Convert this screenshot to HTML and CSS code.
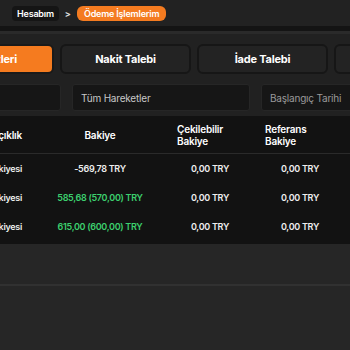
FILE: index.html
```html
<!DOCTYPE html>
<html lang="tr">
<head>
    <meta charset="UTF-8" />
    <title>Ödeme İşlemlerim</title>
    <link rel="stylesheet" href="styles.css">
</head>
<body>
    <header class="topbar">
        <nav class="crumbs">
            <a href="/hesabim" class="crumb">Hesabım</a>
            <span class="sep">&gt;</span>
            <a href="/odeme-islemlerim" class="crumb active">Ödeme İşlemlerim</a>
        </nav>
    </header>
    <div class="divider"></div>

    <main class="page">
        <div class="tabs">
            <button class="tab active">Hareketleri</button>
            <button class="tab">Nakit Talebi</button>
            <button class="tab">İade Talebi</button>
            <button class="tab">Para Yatırma</button>
        </div>

        <div class="filters">
            <div class="field field-first">İşlem Türü</div>
            <div class="field">Tüm Hareketler</div>
            <div class="field muted">Başlangıç Tarihi</div>
            <div class="field muted">Bitiş Tarihi</div>
        </div>
    </main>

    <div class="table-wrap">
        <table class="balances">
            <colgroup>
                <col style="width: 122px">
                <col style="width: 110px">
                <col style="width: 110px">
                <col style="width: 70px">
                <col style="width: 100px">
            </colgroup>
            <thead>
                <tr>
                    <th class="col-name">Açıklık</th>
                    <th>Bakiye</th>
                    <th class="left pad">Çekilebilir<br>Bakiye</th>
                    <th class="left">Referans<br>Bakiye</th>
                    <th></th>
                </tr>
            </thead>
            <tbody>
                <tr>
                    <td class="col-name">Nakit Bakiyesi</td>
                    <td>-569,78 TRY</td>
                    <td>0,00 TRY</td>
                    <td>0,00 TRY</td>
                    <td></td>
                </tr>
                <tr>
                    <td class="col-name">Spor Bakiyesi</td>
                    <td class="pos">585,68 (570,00) TRY</td>
                    <td>0,00 TRY</td>
                    <td>0,00 TRY</td>
                    <td></td>
                </tr>
                <tr>
                    <td class="col-name">Oyun Bakiyesi</td>
                    <td class="pos">615,00 (600,00) TRY</td>
                    <td>0,00 TRY</td>
                    <td>0,00 TRY</td>
                    <td></td>
                </tr>
            </tbody>
        </table>
    </div>

    <div class="panel-foot"></div>
</body>
</html>
```

FILE: styles.css
```css
body {
    margin: 0;
    background: #262626;
    font-family: 'Inter', 'Noto Sans', sans-serif;
    overflow: hidden;
}

.topbar {
    height: 26px;
    background: #222;
    display: flex;
    align-items: center;
    padding-left: 12px;
}

.crumbs {
    display: flex;
    align-items: center;
}

.crumb {
    color: white;
    text-decoration: none;
    font-size: 9px;
    font-weight: 600;
    background: #151515;
    height: 15px;
    line-height: 15px;
    padding: 0 5px;
    border-radius: 4px;
    letter-spacing: -0.2px;
}

.crumb.active {
    background: #f47b20;
    border-radius: 6px;
    padding: 0 7px;
}

.sep {
    color: #ddd;
    font-size: 9px;
    font-weight: 700;
    margin: 0 6px;
}

.divider {
    height: 5px;
    background: #141414;
}

.page {
    background: #212121;
    border-top: 3px solid #2a2a2a;
    padding-top: 10px;
    padding-bottom: 5px;
}

.tabs {
    display: flex;
    gap: 6px;
    margin-left: -77px;
}

.tab {
    flex-shrink: 0;
    width: 131px;
    height: 30px;
    background: #232323;
    border: 2px solid #161616;
    border-radius: 6px;
    color: white;
    font-family: inherit;
    font-size: 11px;
    font-weight: 700;
    letter-spacing: -0.2px;
}

.tab.active {
    background: #f57b1f;
    border-color: #1a1a1a;
}

.filters {
    display: flex;
    gap: 11px;
    margin-top: 10px;
    margin-left: -77px;
}

.field {
    flex-shrink: 0;
    width: 178px;
    height: 27px;
    box-sizing: border-box;
    display: flex;
    align-items: center;
    padding-left: 8px;
    background: #161616;
    border: 1px solid #262626;
    border-radius: 3px;
    color: #c8c8c8;
    font-size: 10px;
    letter-spacing: -0.2px;
}

.field-first {
    width: 138px;
}

.field.muted {
    color: #9a9a9a;
}

.table-wrap {
    background: #121212;
    margin-left: -77px;
    padding-bottom: 3px;
}

.balances {
    border-collapse: collapse;
    table-layout: fixed;
    width: 512px;
}

.balances th {
    height: 37px;
    padding: 0;
    color: white;
    font-size: 10px;
    font-weight: 600;
    text-align: center;
    line-height: 12px;
    border-bottom: 1px solid #2a2a2a;
    letter-spacing: -0.2px;
}

.balances th.left {
    text-align: left;
}

.balances th.pad {
    padding-left: 22px;
}

.balances td {
    height: 29px;
    padding: 0;
    color: #eee;
    font-size: 9px;
    font-weight: 600;
    text-align: center;
    letter-spacing: -0.3px;
}

.balances .col-name {
    text-align: right;
    padding-right: 23px;
}

.balances td.pos {
    color: #3ccf6e;
}

.panel-foot {
    height: 40px;
    border-bottom: 2px solid #313131;
}
```
